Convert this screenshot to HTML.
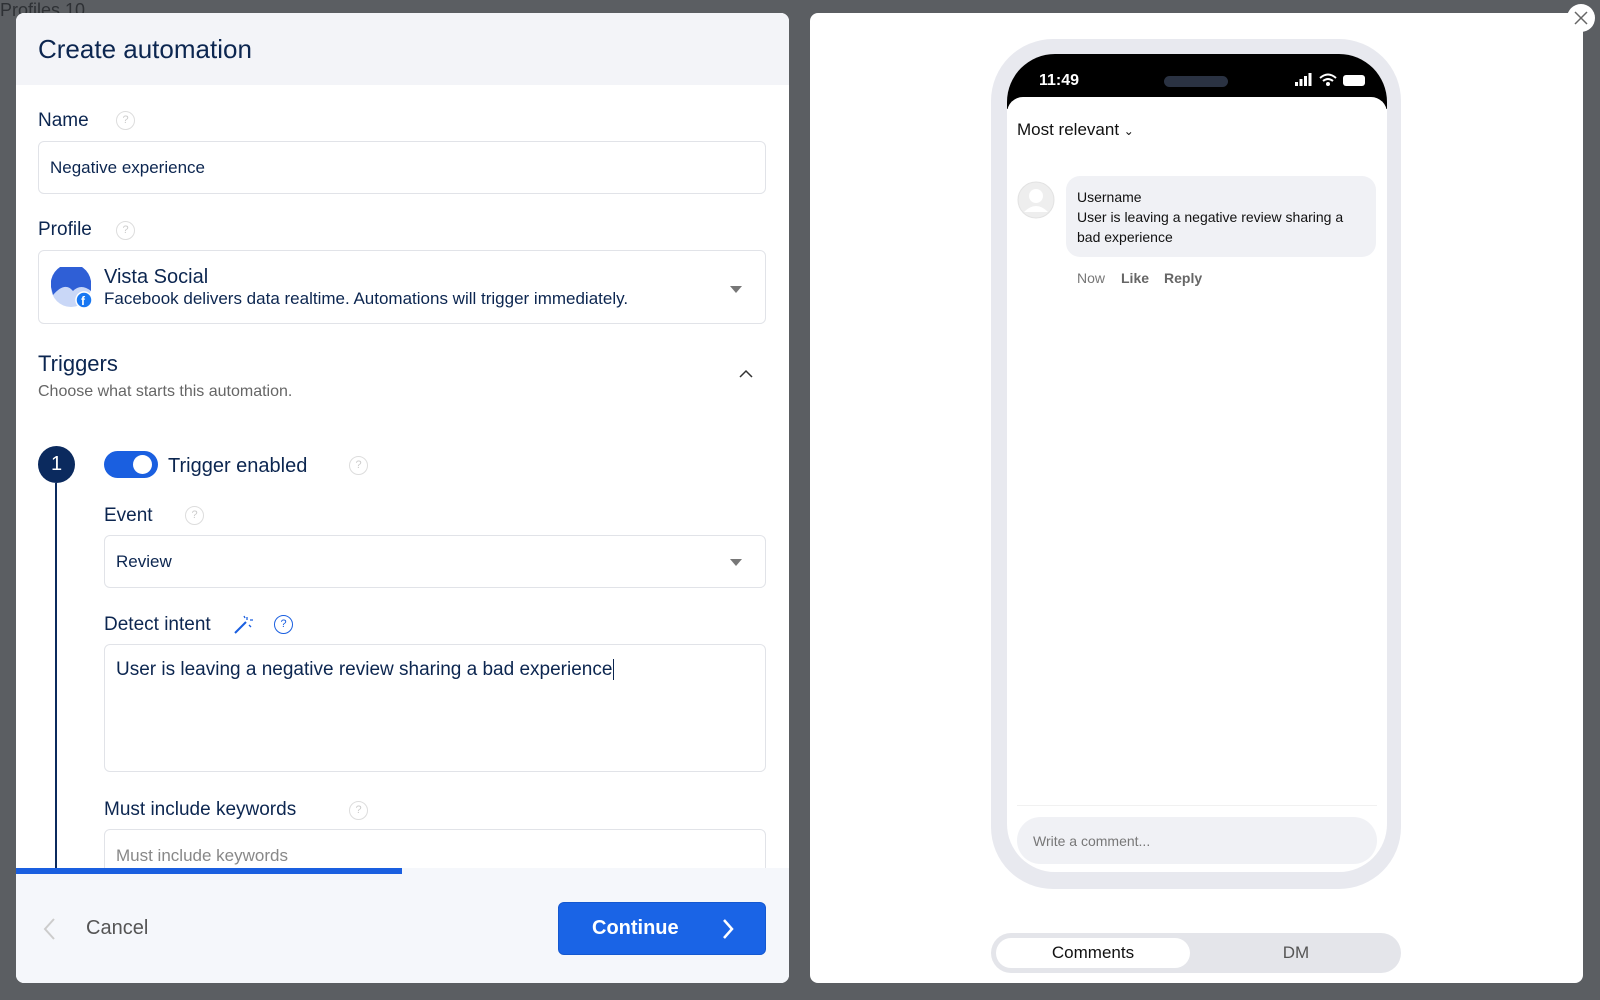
<!DOCTYPE html>
<html><head><meta charset="utf-8"><style>
*{box-sizing:border-box;margin:0;padding:0}
body{width:1600px;height:1000px;background:#5b5e62;font-family:"Liberation Sans",sans-serif;position:relative;overflow:hidden;color:#0c2650}
.a{position:absolute}
.lp{left:16px;top:13px;width:773px;height:970px;background:#fff;border-radius:8px;overflow:hidden}
.hd{left:0;top:0;width:773px;height:72px;background:#f3f4f8}
.lbl{font-size:19px;color:#0c2650}
.q{width:19px;height:19px;border:1.5px solid #ddd;border-radius:50%;color:#ccc;font-size:11px;text-align:center;line-height:16px}
.inp{border:1px solid #e1e3e8;border-radius:6px;background:#fff}
.t16{font-size:17px}
.rp{left:810px;top:13px;width:773px;height:970px;background:#fff;border-radius:8px}
</style></head><body>
<div class="a" style="left:0;top:0;font-size:18px;color:#2e3135">Profiles 10</div>
<div class="a lp">
 <div class="a hd"></div>
 <div class="a" style="left:22px;top:21px;font-size:26px">Create automation</div>
 <div class="a lbl" style="left:22px;top:97px">Name</div><div class="a q" style="left:100px;top:98px">?</div>
 <div class="a inp" style="left:22px;top:128px;width:728px;height:53px"></div>
 <div class="a t16" style="left:34px;top:145px">Negative experience</div>
 <div class="a lbl" style="left:22px;top:206px">Profile</div><div class="a q" style="left:100px;top:208px">?</div>
 <div class="a inp" style="left:22px;top:237px;width:728px;height:74px"></div>
 <svg class="a" style="left:35px;top:254px" width="44" height="44"><circle cx="20" cy="20" r="20" fill="#c9d7f7"/><path d="M0 20 A20 20 0 0 1 40 14 L40 24 Q30 16 22 24 Q14 14 2 28Z" fill="#2f5fd6"/><circle cx="33" cy="33" r="8" fill="#1877f2" stroke="#fff" stroke-width="1.5"/><text x="30" y="38" font-size="12" font-weight="bold" fill="#fff" font-family="Liberation Sans">f</text></svg>
 <div class="a" style="left:88px;top:253px;font-size:20px">Vista Social</div>
 <div class="a t16" style="left:88px;top:276px">Facebook delivers data realtime. Automations will trigger immediately.</div>
 <div class="a" style="left:714px;top:273px;width:0;height:0;border-left:6px solid transparent;border-right:6px solid transparent;border-top:7px solid #777"></div>
 <div class="a" style="left:22px;top:338px;font-size:22px">Triggers</div>
 <div class="a" style="left:22px;top:370px;font-size:16px;color:#666">Choose what starts this automation.</div>
 <svg class="a" style="left:722px;top:356px" width="16" height="10"><path d="M2 8 L8 2 L14 8" stroke="#333" stroke-width="1.5" fill="none"/></svg>
 <div class="a" style="left:22px;top:433px;width:37px;height:37px;border-radius:50%;background:#0b2a5e;color:#fff;font-size:20px;text-align:center;line-height:37px">1</div>
 <div class="a" style="left:39px;top:470px;width:2px;height:400px;background:#0b2a5e"></div>
 <div class="a" style="left:88px;top:438px;width:54px;height:27px;border-radius:14px;background:#1a5fe0"></div>
 <div class="a" style="left:117px;top:442px;width:19px;height:19px;border-radius:50%;background:#fff"></div>
 <div class="a" style="left:152px;top:442px;font-size:20px">Trigger enabled</div><div class="a q" style="left:333px;top:443px">?</div>
 <div class="a lbl" style="left:88px;top:492px">Event</div><div class="a q" style="left:169px;top:493px">?</div>
 <div class="a inp" style="left:88px;top:522px;width:662px;height:53px"></div>
 <div class="a t16" style="left:100px;top:539px">Review</div>
 <div class="a" style="left:714px;top:546px;width:0;height:0;border-left:6px solid transparent;border-right:6px solid transparent;border-top:7px solid #777"></div>
 <div class="a lbl" style="left:88px;top:601px">Detect intent</div>
 <svg class="a" style="left:216px;top:601px" width="22" height="22"><path d="M3 19 L14 8" stroke="#1a5fe0" stroke-width="2"/><path d="M15 3v3M18 6h3M17 11l2 2M12 2l1 2" stroke="#1a5fe0" stroke-width="1.3"/></svg>
 <div class="a q" style="left:258px;top:602px;border-color:#1a5fe0;color:#1a5fe0">?</div>
 <div class="a inp" style="left:88px;top:631px;width:662px;height:128px"></div>
 <div class="a" style="left:100px;top:646px;font-size:19px">User is leaving a negative review sharing a bad experience<span style="border-left:1.5px solid #0c2650;margin-left:1px"></span></div>
 <div class="a lbl" style="left:88px;top:786px">Must include keywords</div><div class="a q" style="left:333px;top:788px">?</div>
 <div class="a inp" style="left:88px;top:816px;width:662px;height:60px"></div>
 <div class="a t16" style="left:100px;top:833px;color:#888">Must include keywords</div>
 <div class="a" style="left:0;top:855px;width:773px;height:115px;background:#f5f7fb"></div>
 <div class="a" style="left:0;top:855px;width:386px;height:6px;background:#1a5fe0"></div>
 <svg class="a" style="left:26px;top:904px" width="14" height="24"><path d="M12 2 L3 12 L12 22" stroke="#ccc" stroke-width="2" fill="none"/></svg>
 <div class="a" style="left:70px;top:904px;font-size:20px;color:#555">Cancel</div>
 <div class="a" style="left:542px;top:889px;width:208px;height:53px;border-radius:6px;background:#1a64e6;border:1px solid #1458d0"></div>
 <div class="a" style="left:576px;top:904px;font-size:20px;color:#fff;font-weight:bold">Continue</div>
 <svg class="a" style="left:705px;top:905px" width="14" height="22"><path d="M3 2 L11 11 L3 20" stroke="#fff" stroke-width="2.5" fill="none"/></svg>
</div>
<div class="a rp"></div>
<div class="a" style="left:991px;top:39px;width:410px;height:850px;border-radius:62px;background:#e8e9ef"></div>
<div class="a" style="left:1007px;top:54px;width:380px;height:818px;border-radius:48px;background:#fff;overflow:hidden">
 <div class="a" style="left:0;top:0;width:380px;height:55px;background:#000"></div>
 <div class="a" style="left:0;top:43px;width:380px;height:30px;background:#fff;border-radius:16px 16px 0 0"></div>
 <div class="a" style="left:32px;top:18px;color:#fff;font-weight:bold;font-size:16px">11:49</div>
 <div class="a" style="left:157px;top:22px;width:64px;height:11px;border-radius:6px;background:#2a3242"></div>
 <svg class="a" style="left:288px;top:18px" width="80" height="18"><rect x="0" y="10" width="3" height="4" fill="#fff"/><rect x="4.5" y="7" width="3" height="7" fill="#fff"/><rect x="9" y="4" width="3" height="10" fill="#fff"/><rect x="13.5" y="1" width="3" height="13" fill="#fff"/><path d="M25 6 Q33 -1 41 6 M28 9 Q33 5 38 9" stroke="#fff" stroke-width="2" fill="none"/><circle cx="33" cy="12" r="2" fill="#fff"/><rect x="48" y="3" width="22" height="11" rx="3" fill="#fff"/></svg>
 <div class="a" style="left:10px;top:66px;font-size:17px;color:#111">Most relevant <span style="font-size:12px">&#8964;</span></div>
 <svg class="a" style="left:10px;top:127px" width="38" height="38"><circle cx="19" cy="19" r="18" fill="#eee" stroke="#e2e2e2"/><circle cx="19" cy="15" r="7" fill="#fff"/><path d="M7 31 Q19 19 31 31" fill="#fff"/></svg>
 <div class="a" style="left:59px;top:122px;width:310px;height:81px;border-radius:14px;background:#f0f1f5"></div>
 <div class="a" style="left:70px;top:133px;font-size:14px;color:#111;line-height:20px">Username<br>User is leaving a negative review sharing a<br>bad experience</div>
 <div class="a" style="left:70px;top:216px;font-size:14px;color:#777">Now</div>
 <div class="a" style="left:114px;top:216px;font-size:14px;color:#666;font-weight:bold">Like</div>
 <div class="a" style="left:157px;top:216px;font-size:14px;color:#666;font-weight:bold">Reply</div>
 <div class="a" style="left:10px;top:751px;width:360px;height:1px;background:#f1f1f1"></div>
 <div class="a" style="left:10px;top:763px;width:360px;height:47px;border-radius:24px;background:#f0f1f5"></div>
 <div class="a" style="left:26px;top:779px;font-size:14px;color:#777">Write a comment...</div>
</div>
<div class="a" style="left:991px;top:933px;width:410px;height:40px;border-radius:20px;background:#e4e5ea"></div>
<div class="a" style="left:996px;top:938px;width:194px;height:30px;border-radius:15px;background:#fff"></div>
<div class="a" style="left:996px;top:943px;width:194px;text-align:center;font-size:17px;color:#111">Comments</div>
<div class="a" style="left:1196px;top:943px;width:200px;text-align:center;font-size:17px;color:#555">DM</div>
<div class="a" style="left:1567px;top:4px;width:28px;height:28px;border-radius:50%;background:#fff"></div>
<svg class="a" style="left:1573px;top:10px" width="16" height="16"><path d="M2 2L14 14M14 2L2 14" stroke="#666" stroke-width="1.5"/></svg>
</body></html>
